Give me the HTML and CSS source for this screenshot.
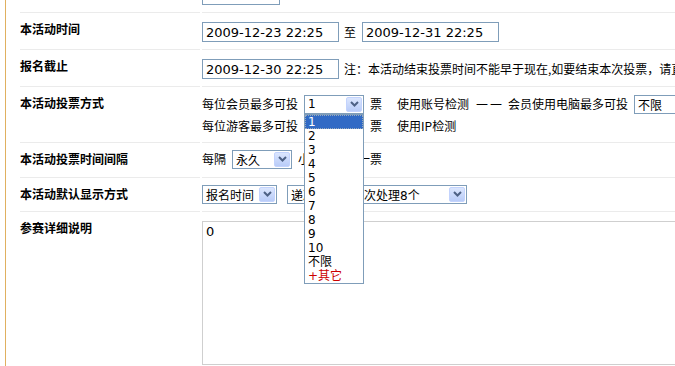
FILE: index.html
```html
<!DOCTYPE html>
<html lang="zh-CN">
<head>
    <meta charset="UTF-8">
    <title>活动设置</title>
    <link rel="stylesheet" href="styles.css">
</head>
<body>
    <div class="wrap">
        <div class="form">
            <!-- 上一行（只露出一点） -->
            <div class="row row-date">
                <div class="label"></div>
                <div class="value"><input class="ipt ipt-small" type="text" value="0"></div>
            </div>
            <!-- 活动时间 -->
            <div class="row row-date">
                <div class="label">本活动时间</div>
                <div class="value">
                    <input class="ipt ipt-date" type="text" value="2009-12-23 22:25">
                    <span class="gap">至</span>
                    <input class="ipt ipt-date" type="text" value="2009-12-31 22:25">
                </div>
            </div>
            <!-- 报名截止 -->
            <div class="row row-date">
                <div class="label">报名截止</div>
                <div class="value">
                    <input class="ipt ipt-date" type="text" value="2009-12-30 22:25">
                    <span class="gap">注：本活动结束投票时间不能早于现在,如要结束本次投票，请直接关闭投票</span>
                </div>
            </div>
            <!-- 投票方式 -->
            <div class="row row-vote">
                <div class="label">本活动投票方式</div>
                <div class="value">
                    <div class="line">
                        <span>每位会员最多可投</span>
                        <span class="select s-num">
                            <span class="sel-text">1</span>
                            <span class="sel-btn"><svg width="9" height="6" viewBox="0 0 9 6"><path d="M1 1 L4.5 4.5 L8 1" fill="none" stroke="#4d6185" stroke-width="2"/></svg></span>
                            <!-- 展开的下拉列表 -->
                            <ul class="droplist">
                                <li class="on">1</li>
                                <li>2</li>
                                <li>3</li>
                                <li>4</li>
                                <li>5</li>
                                <li>6</li>
                                <li>7</li>
                                <li>8</li>
                                <li>9</li>
                                <li>10</li>
                                <li>不限</li>
                                <li class="other">+其它</li>
                            </ul>
                        </span>
                        <span class="unit">票</span>
                        <span class="check">使用账号检测</span>
                        <span class="dash">——</span>
                        <span class="unit pc-label">会员使用电脑最多可投</span>
                        <span class="select s-pc">
                            <span class="sel-text">不限</span>
                            <span class="sel-btn"><svg width="9" height="6" viewBox="0 0 9 6"><path d="M1 1 L4.5 4.5 L8 1" fill="none" stroke="#4d6185" stroke-width="2"/></svg></span>
                        </span>
                    </div>
                    <div class="line">
                        <span>每位游客最多可投</span>
                        <span class="select s-num">
                            <span class="sel-text">1</span>
                            <span class="sel-btn"><svg width="9" height="6" viewBox="0 0 9 6"><path d="M1 1 L4.5 4.5 L8 1" fill="none" stroke="#4d6185" stroke-width="2"/></svg></span>
                        </span>
                        <span class="unit">票</span>
                        <span class="check">使用IP检测</span>
                    </div>
                </div>
            </div>
            <!-- 投票时间间隔 -->
            <div class="row row-sel">
                <div class="label">本活动投票时间间隔</div>
                <div class="value">
                    <div class="line">
                        <span>每隔</span>
                        <span class="select s-num">
                            <span class="sel-text">永久</span>
                            <span class="sel-btn"><svg width="9" height="6" viewBox="0 0 9 6"><path d="M1 1 L4.5 4.5 L8 1" fill="none" stroke="#4d6185" stroke-width="2"/></svg></span>
                        </span>
                        <span class="unit">小时内可投一票</span>
                    </div>
                </div>
            </div>
            <!-- 默认显示方式 -->
            <div class="row row-sel2">
                <div class="label">本活动默认显示方式</div>
                <div class="value">
                    <div class="line">
                        <span class="select s-order">
                            <span class="sel-text">报名时间</span>
                            <span class="sel-btn"><svg width="9" height="6" viewBox="0 0 9 6"><path d="M1 1 L4.5 4.5 L8 1" fill="none" stroke="#4d6185" stroke-width="2"/></svg></span>
                        </span>
                        <span class="select s-dir">
                            <span class="sel-text">递减</span>
                            <span class="sel-btn"><svg width="9" height="6" viewBox="0 0 9 6"><path d="M1 1 L4.5 4.5 L8 1" fill="none" stroke="#4d6185" stroke-width="2"/></svg></span>
                        </span>
                        <span class="select s-page">
                            <span class="sel-text">每次处理8个</span>
                            <span class="sel-btn"><svg width="9" height="6" viewBox="0 0 9 6"><path d="M1 1 L4.5 4.5 L8 1" fill="none" stroke="#4d6185" stroke-width="2"/></svg></span>
                        </span>
                    </div>
                </div>
            </div>
            <!-- 详细说明 -->
            <div class="row row-text">
                <div class="label">参赛详细说明</div>
                <div class="value"><textarea class="desc">0</textarea></div>
            </div>
        </div>
    </div>
</body>
</html>
```

FILE: styles.css
```css
*{
    margin: 0;
    padding: 0;
}
html{
    overflow: hidden;
    background: #fff;
}
body{
    font: 12px "Noto Sans CJK SC", sans-serif;
    color: #000;
}
/* 左侧橙色竖线 */
.wrap{
    margin-left: 5px;
    border-left: 1px solid #e0b060;
    padding-left: 14px;
    height: 366px;
    overflow: hidden;
}
.form{
    width: 1000px;
    margin-top: -24px;
}
.row{
    display: grid;
    grid-template-columns: 180px 1fr;
    column-gap: 2px;
}
.label,.value{
    border-bottom: 1px solid #ebebeb;
}
.label{
    font-weight: bold;
    line-height: 16px;
    padding-top: 8px;
    white-space: nowrap;
}
.value{
    white-space: nowrap;
}
.row-date .value{
    display: flex;
    align-items: flex-start;
    height: 27px;
    padding-top: 9px;
}
.row-vote .value{height: 49px;padding-top: 6px;}
.row-sel .value{height: 29px;padding-top: 5px;}
.row-sel2 .value{height: 28px;padding-top: 5px;}
.row-text .label,.row-text .value{border-bottom: 0;}
.row-text .value{padding-top: 9px;}

.line{
    display: flex;
    align-items: center;
    height: 22px;
    line-height: 16px;
}
.gap{
    line-height: 20px;
    margin-left: 5px;
}
.gap + .ipt{margin-left: 6px;}

/* 文本框 */
.ipt{
    box-sizing: border-box;
    height: 20px;
    border: 1px solid #7f9db9;
    padding: 0 3px;
    font: 13px "DejaVu Sans", sans-serif;
    color: #000;
    background: #fff;
    outline: none;
}
.ipt-small{width: 78px;}
.ipt-date{width: 137px;}

/* 下拉框 */
.select{
    position: relative;
    display: inline-flex;
    align-items: center;
    box-sizing: border-box;
    height: 19px;
    border: 1px solid #7f9db9;
    background: #fff;
    margin-left: 6px;
    font: 12px "DejaVu Sans", "Noto Sans CJK SC", sans-serif;
}
.sel-text{
    flex: 1;
    padding-left: 3px;
    overflow: hidden;
}
.sel-btn{
    display: flex;
    align-items: center;
    justify-content: center;
    box-sizing: border-box;
    width: 16px;
    height: 15px;
    margin-right: 1px;
    border: 1px solid #c3d3fd;
    border-radius: 2px;
    background: linear-gradient(#dbe6fe, #b9ccf8);
}
.s-num{width: 60px;}
.s-pc{width: 80px;}
.s-order{width: 75px;margin-left: 0;}
.s-dir{width: 55px;margin-left: 10px;}
.s-page{width: 119px;}

.unit{margin-left: 6px;}
.check{margin-left: 15px;}
.dash{
    margin-left: 7px;
    font: 12px "DejaVu Sans", sans-serif;
    letter-spacing: 2px;
}
.pc-label{margin-left: 4px;}

/* 展开的列表 */
.droplist{
    position: absolute;
    left: -1px;
    top: 18px;
    width: 58px;
    border: 1px solid #7f9db9;
    background: #fff;
    list-style: none;
    z-index: 10;
}
.droplist li{
    height: 14px;
    line-height: 14px;
    padding-left: 3px;
}
.droplist li.on{
    background: #316ac5;
    color: #fff;
    outline: 1px dotted #9ab;
    outline-offset: -1px;
}
.droplist li.other{color: #c00;}

/* 多行文本 */
.desc{
    display: block;
    box-sizing: border-box;
    width: 600px;
    height: 144px;
    border: 1px solid #cfcfcf;
    padding: 2px 3px;
    font: 13px "DejaVu Sans", sans-serif;
    resize: none;
    outline: none;
}
```
